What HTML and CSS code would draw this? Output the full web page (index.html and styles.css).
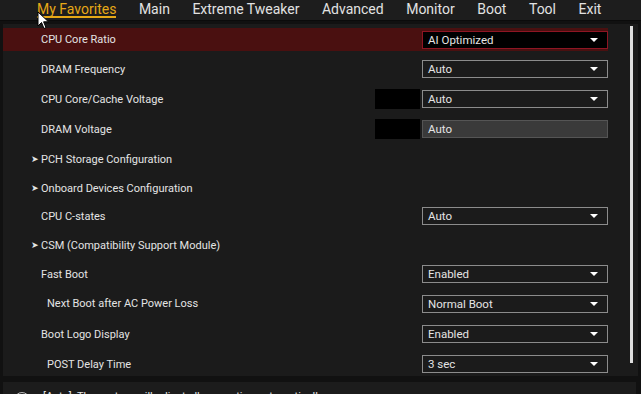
FILE: index.html
```html
<!DOCTYPE html>
<html lang="en">
<head>
  <meta charset="UTF-8">
  <title>BIOS - My Favorites</title>
  <link rel="stylesheet" href="styles.css">
</head>
<body>
  <nav class="topbar">
    <a class="tab active">My Favorites</a>
    <a class="tab">Main</a>
    <a class="tab">Extreme Tweaker</a>
    <a class="tab">Advanced</a>
    <a class="tab">Monitor</a>
    <a class="tab">Boot</a>
    <a class="tab">Tool</a>
    <a class="tab">Exit</a>
  </nav>

  <svg class="cursor" width="14" height="20" viewBox="0 0 14 20">
    <path d="M1 1 L1 15 L4.5 11.5 L7 17.5 L9 16.6 L6.6 10.8 L11.5 10.8 Z" fill="#fff" stroke="#000" stroke-width="1"/>
  </svg>

  <div class="main">
    <div class="list">
      <div class="row h30 selected">
        <span class="label">CPU Core Ratio</span>
        <div class="select red"><span>AI Optimized</span><i class="caret"></i></div>
      </div>
      <div class="row h30">
        <span class="label">DRAM Frequency</span>
        <div class="select"><span>Auto</span><i class="caret"></i></div>
      </div>
      <div class="row h30">
        <span class="label">CPU Core/Cache Voltage</span>
        <div class="value-box"></div>
        <div class="select"><span>Auto</span><i class="caret"></i></div>
      </div>
      <div class="row h30">
        <span class="label">DRAM Voltage</span>
        <div class="value-box"></div>
        <div class="input">Auto</div>
      </div>
      <div class="row h30">
        <span class="label sub"><b class="arrow">&#10148;</b>PCH Storage Configuration</span>
      </div>
      <div class="row h28">
        <span class="label sub"><b class="arrow">&#10148;</b>Onboard Devices Configuration</span>
      </div>
      <div class="row h28">
        <span class="label">CPU C-states</span>
        <div class="select"><span>Auto</span><i class="caret"></i></div>
      </div>
      <div class="row h30">
        <span class="label sub"><b class="arrow">&#10148;</b>CSM (Compatibility Support Module)</span>
      </div>
      <div class="row h28">
        <span class="label">Fast Boot</span>
        <div class="select"><span>Enabled</span><i class="caret"></i></div>
      </div>
      <div class="row h31">
        <span class="label indent">Next Boot after AC Power Loss</span>
        <div class="select"><span>Normal Boot</span><i class="caret"></i></div>
      </div>
      <div class="row h30">
        <span class="label">Boot Logo Display</span>
        <div class="select"><span>Enabled</span><i class="caret"></i></div>
      </div>
      <div class="row h30">
        <span class="label indent">POST Delay Time</span>
        <div class="select"><span>3 sec</span><i class="caret"></i></div>
      </div>
    </div>
    <div class="scrollbar"><div class="thumb"></div></div>
  </div>

  <div class="help">
    <span class="help-icon"></span>
    <span class="help-text">[Auto]: The system will adjust all core ratios automatically.</span>
  </div>
</body>
</html>
```

FILE: styles.css
```css
body {
  margin: 0;
  width: 641px;
  height: 394px;
  overflow: hidden;
  background-color: #111;
  font-family: Roboto, 'Noto Sans', sans-serif;
  color: #e4e4e4;
  position: relative;
}
.topbar {
  display: flex;
  gap: 22.5px;
  height: 20px;
  padding-left: 37px;
  background-color: #1d1d1d;
  border-bottom: 1px solid #0b0b0b;
  font-size: 14px;
  line-height: 19px;
}
.tab {
  color: #e2e2e2;
  white-space: nowrap;
}
.tab.active {
  color: #e6a817;
  border-bottom: 2px solid #e6a817;
  height: 16px;
  line-height: 19px;
}
.cursor {
  position: absolute;
  left: 37px;
  top: 11px;
}
.main {
  display: flex;
  margin-left: 3px;
  margin-top: 3px;
  width: 635px;
  height: 352px;
  overflow: hidden;
  background-color: #1b1b1b;
}
.list {
  width: 619px;
  font-size: 11px;
}
.row {
  display: flex;
  align-items: center;
  padding-right: 14px;
}
.h28 { height: 28px; }
.h30 { height: 30px; }
.h31 { height: 31px; }
.row.selected {
  background-color: #4a1010;
  background-clip: content-box;
  border-top: 4px solid #1b1b1b;
  border-bottom: 3px solid #1b1b1b;
  height: 23px;
  box-sizing: content-box;
}
.label {
  flex: 1;
  padding-left: 38px;
  white-space: nowrap;
}
.label.indent {
  padding-left: 44px;
}
.label.sub {
  padding-left: 28px;
}
.arrow {
  display: inline-block;
  width: 10px;
  font-size: 9px;
  font-weight: normal;
  vertical-align: 1px;
}
.select, .input {
  height: 16px;
  border: 1px solid #8c8c8c;
  display: flex;
  align-items: center;
  justify-content: space-between;
  padding: 0 0 0 5px;
  box-sizing: content-box;
  width: 179px;
  font-size: 11.5px;
}
.select.red {
  background-color: #000;
  border-color: #8e1523;
}
.input {
  background-color: #3a3a3a;
  border-color: #555;
}
.caret {
  width: 0;
  height: 0;
  border-left: 4px solid transparent;
  border-right: 4px solid transparent;
  border-top: 4px solid #fff;
  margin-right: 9px;
}
.value-box {
  width: 45px;
  height: 20px;
  background-color: #000;
  margin-right: 2px;
}
.scrollbar {
  width: 16px;
  padding-top: 2px;
}
.thumb {
  margin-left: 8px;
  width: 3px;
  height: 337px;
  background-color: #dedede;
}
.help {
  display: flex;
  align-items: flex-start;
  margin-top: 6px;
  margin-left: 3px;
  width: 633px;
  height: 20px;
  background-color: #1c1c1c;
  font-size: 11px;
}
.help-icon {
  width: 14px;
  height: 14px;
  border: 1px solid #bbb;
  border-radius: 50%;
  margin: 10px 0 0 11px;
}
.help-text {
  margin: 8px 0 0 13px;
  white-space: nowrap;
}
```
